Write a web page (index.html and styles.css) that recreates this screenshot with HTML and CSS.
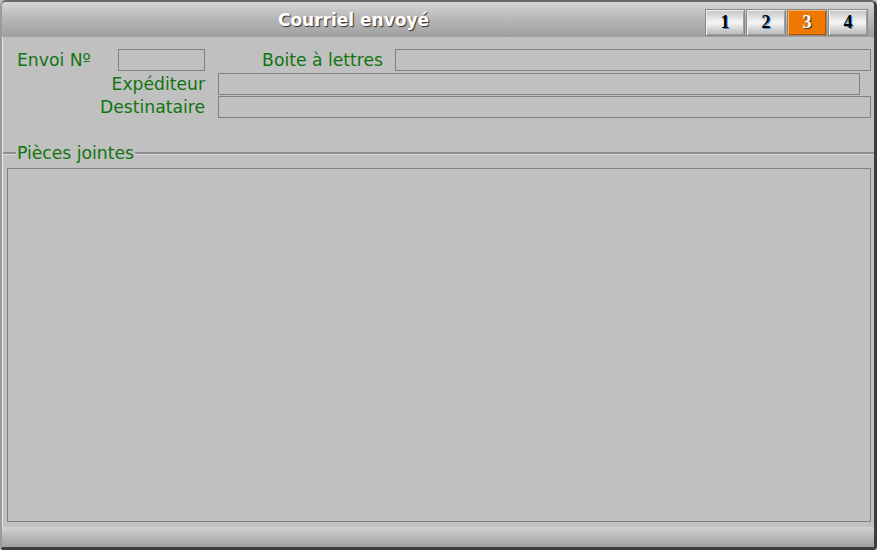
FILE: index.html
```html
<!DOCTYPE html>
<html>
  <head>
    <title>Courriel envoyé</title>
    <meta name="viewport" content="width=device-width, initial-scale=1.0">
    <link rel="stylesheet" href="styles.css">
  </head>
  <body>
    <div class="window">
      <div class="titlebar">
        <div class="title">Courriel envoyé</div>
        <div class="tabs">
          <button class="tab">1</button>
          <button class="tab">2</button>
          <button class="tab tab-active">3</button>
          <button class="tab">4</button>
        </div>
      </div>

      <div class="content">
        <div class="row row-first">
          <div class="label label-envoi">Envoi Nº</div>
          <div class="field field-envoi"></div>
          <div class="label label-boite">Boite à lettres</div>
          <div class="field field-boite"></div>
        </div>
        <div class="row row-second">
          <div class="label label-wide">Expéditeur</div>
          <div class="field field-exp"></div>
        </div>
        <div class="row">
          <div class="label label-wide">Destinataire</div>
          <div class="field field-dest"></div>
        </div>

        <div class="group-head">
          <div class="group-line group-line-short"></div>
          <div class="group-title">Pièces jointes</div>
          <div class="group-line"></div>
        </div>
        <div class="group-box"></div>
      </div>

      <div class="footer"></div>
    </div>
  </body>
</html>
```

FILE: styles.css
```css
body{
  margin: 0;
  background-color: #c0c0c0;
  font-family: "DejaVu Sans", Verdana, sans-serif;
}

.window{
  width: 877px;
  height: 550px;
  box-sizing: border-box;
  display: flex;
  flex-direction: column;
  background-color: #c0c0c0;
  border-top: 2px solid #6a6a6a;
  border-left: 2px solid #9a9a9a;
  border-right: 3px solid #3c3c3c;
  border-bottom: 3px solid #3c3c3c;
  border-radius: 6px 6px 4px 4px;
  box-shadow: inset 1px 0 0 #e8e8e8;
  overflow: hidden;
}

.titlebar{
  height: 35px;
  display: flex;
  align-items: flex-start;
  background: linear-gradient(#d6d6d6, #b8b8b8 45%, #a0a0a0);
}
.title{
  flex: 1;
  text-align: center;
  color: white;
  font-weight: bold;
  font-size: 17px;
  line-height: 37px;
  text-shadow: 1px 1px 1px #303030;
}
.tabs{
  display: flex;
  gap: 1px;
  margin-top: 7px;
  margin-right: 6px;
}
.tab{
  width: 40px;
  height: 27px;
  padding: 0;
  border: 1px solid #8a8a8a;
  box-shadow: inset 1px 1px 0 #f0f0f0, inset -1px -1px 0 #a0a0a0;
  background: linear-gradient(#c4c4c4, #f6f6f6 50%, #b4b4b4);
  font-family: "Liberation Serif", "Times New Roman", serif;
  font-weight: bold;
  font-size: 18px;
  color: black;
  text-shadow: 1px 1px 0 #4a90c8;
}
.tab-active{
  background: #ee7800;
  box-shadow: inset 1px 1px 0 #f8b060, inset -1px -1px 0 #b05800;
  color: white;
  text-shadow: 1px 1px 0 #404040;
}

.content{
  flex: 1;
  padding-top: 12px;
}
.row{
  display: flex;
  height: 22px;
  align-items: center;
}
.row-first{
  margin-bottom: 2px;
}
.row-second{
  margin-bottom: 1px;
}
.label{
  color: #107410;
  font-size: 17.2px;
  line-height: 22px;
  box-sizing: border-box;
  white-space: nowrap;
}
.label-envoi{
  width: 116px;
  padding-left: 15px;
}
.label-boite{
  width: 190px;
  text-align: right;
  padding-right: 12px;
}
.label-wide{
  width: 216px;
  text-align: right;
  padding-right: 13px;
}
.field{
  height: 22px;
  box-sizing: border-box;
  border: 1px solid #808080;
}
.field-envoi{ width: 87px; }
.field-boite{ width: 476px; }
.field-exp{ width: 642px; }
.field-dest{ width: 653px; }

.group-head{
  display: flex;
  align-items: center;
  height: 20px;
  margin-top: 25px;
}
.group-line{
  flex: 1;
  height: 2px;
  background-color: #8e8e8e;
  border-bottom: 1px solid #d8d8d8;
}
.group-line-short{
  flex: none;
  width: 13px;
  margin-left: 1px;
}
.group-title{
  color: #107410;
  font-size: 17.2px;
  padding: 0 1px;
}
.group-box{
  height: 354px;
  width: 864px;
  box-sizing: border-box;
  margin-top: 5px;
  margin-left: 5px;
  border: 1px solid #808080;
}

.footer{
  height: 20px;
  background: linear-gradient(#d2d2d2, #b8b8b8 50%, #a0a0a0);
}
```
